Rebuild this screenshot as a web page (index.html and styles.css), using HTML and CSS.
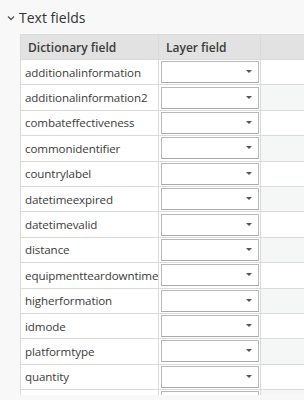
FILE: index.html
```html
<!DOCTYPE html>
<html lang="en">
<head>
  <meta charset="UTF-8">
  <meta name="viewport" content="width=device-width, initial-scale=1.0">
  <title>Text fields</title>
  <link rel="stylesheet" href="styles.css">
</head>
<body>
  <div class="panel">
    <div class="section-title">
      <svg class="chevron" width="8" height="6" viewBox="0 0 8 6"><path d="M1 1.5 L4 4.5 L7 1.5" fill="none" stroke="#555" stroke-width="1.3"/></svg>
      <span>Text fields</span>
    </div>

    <div class="grid-wrap">
      <table class="field-grid">
        <colgroup>
          <col class="w-dict">
          <col class="w-layer">
          <col class="w-rest">
        </colgroup>
        <thead>
          <tr>
            <th>Dictionary field</th>
            <th>Layer field</th>
            <th></th>
          </tr>
        </thead>
        <tbody id="rows"></tbody>
      </table>
    </div>
  </div>

  <script>
    const fields = [
      'additionalinformation', 'additionalinformation2', 'combateffectiveness',
      'commonidentifier', 'countrylabel', 'datetimeexpired', 'datetimevalid',
      'distance', 'equipmentteardowntime', 'higherformation', 'idmode',
      'platformtype', 'quantity', ''
    ];
    const body = document.getElementById('rows');
    fields.forEach((name) => {
      const tr = document.createElement('tr');
      tr.innerHTML =
        '<td class="col-dict">' + name + '</td>' +
        '<td class="col-layer"><div class="combo"><span class="arrow"></span></div></td>' +
        '<td class="col-rest"></td>';
      body.appendChild(tr);
    });
  </script>
</body>
</html>
```

FILE: styles.css
```css
body {
  margin: 0;
  padding: 0;
  background-color: #f8f8f8;
  font-family: 'Open Sans', 'Noto Sans', sans-serif;
  color: #3b3b3b;
  overflow: hidden;
}

.panel {
  height: 400px;
}

.section-title {
  display: flex;
  align-items: center;
  height: 34px;
  padding-left: 7px;
  gap: 4px;
  font-size: 14px;
  color: #333;
}

.chevron {
  margin-top: 1px;
}

.grid-wrap {
  margin-left: 20px;
  height: 361px;
  overflow: hidden;
}

.field-grid {
  border-collapse: collapse;
  table-layout: fixed;
  width: 300px;
  font-size: 12px;
}

.w-dict {
  width: 138px;
}

.w-layer {
  width: 102px;
}

.w-rest {
  width: 60px;
}

.field-grid th,
.field-grid td {
  box-sizing: border-box;
  border: 1px solid #dadada;
  padding: 0;
  text-align: left;
  white-space: nowrap;
  overflow: hidden;
}

.field-grid th {
  background-color: #e2e2e2;
  font-weight: 600;
  height: 25px;
  padding-left: 7px;
  color: #3b3b3b;
}

.field-grid td {
  height: 25.4px;
  background-color: #fff;
}

.field-grid td.col-dict {
  padding-left: 4px;
  font-size: 11.6px;
  letter-spacing: -0.1px;
}

.field-grid tbody tr:nth-child(even) td.col-rest {
  background-color: #f5f6f6;
}

.combo {
  position: relative;
  height: 20px;
  margin: 0 1px 0 2px;
  border: 1px solid #b9b9b9;
  border-bottom-color: #a9a9a9;
  background-color: #fff;
}

.arrow {
  position: absolute;
  right: 6px;
  top: 8px;
  border-left: 3px solid transparent;
  border-right: 3px solid transparent;
  border-top: 3px solid #555;
}
```
